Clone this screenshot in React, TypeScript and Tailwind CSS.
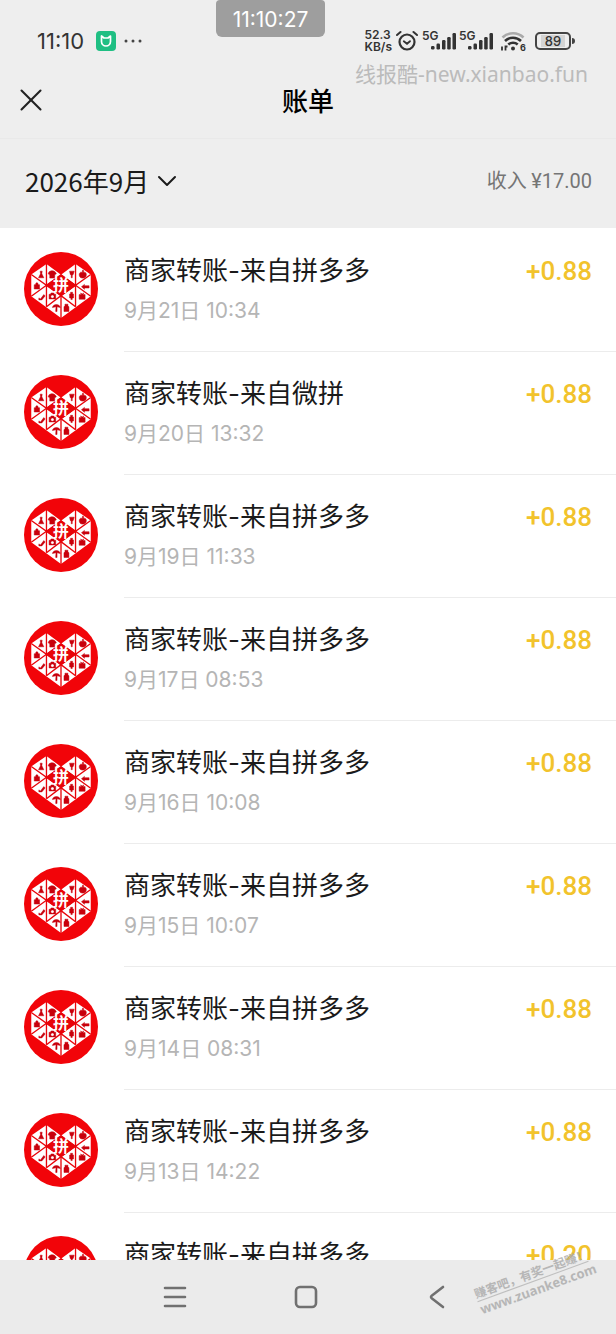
import React from 'react'
import { X, ChevronDown } from 'lucide-react'

interface Bill {
  title: string
  time: string
  amount: string
}

const bills: Bill[] = [
  { title: '商家转账-来自拼多多', time: '9月21日 10:34', amount: '+0.88' },
  { title: '商家转账-来自微拼', time: '9月20日 13:32', amount: '+0.88' },
  { title: '商家转账-来自拼多多', time: '9月19日 11:33', amount: '+0.88' },
  { title: '商家转账-来自拼多多', time: '9月17日 08:53', amount: '+0.88' },
  { title: '商家转账-来自拼多多', time: '9月16日 10:08', amount: '+0.88' },
  { title: '商家转账-来自拼多多', time: '9月15日 10:07', amount: '+0.88' },
  { title: '商家转账-来自拼多多', time: '9月14日 08:31', amount: '+0.88' },
  { title: '商家转账-来自拼多多', time: '9月13日 14:22', amount: '+0.88' },
  { title: '商家转账-来自拼多多', time: '', amount: '+0.20' },
]

// Heart made of triangles, one goods symbol in each
const MerchantLogo: React.FC = () => (
  <svg viewBox="0 0 224 224" className="w-[74px] h-[74px] shrink-0" aria-hidden="true">
    <circle cx="112" cy="112" r="112" fill="#f20409" />
    <path d="M68 36 L112 69 L156 36 L202 68 V134 L112 200 L22 134 V68 Z" fill="#fff" />
    <path d="M112 67 L158 101 L112 134 L66 101 Z" fill="#e8040a" />
    <g stroke="#e8040a" strokeWidth="4" fill="none">
      <path d="M68 36 V166 M156 36 V166 M112 132 V200" />
      <path d="M22 68 L112 132 L202 68 M22 134 L112 69 L202 134 M68 166 L112 132 L156 166" />
    </g>
    <g fill="#c8000c" stroke="#c8000c" strokeWidth="1.5">
      {/* dress, shirt */}
      <path d="M49 58h6l-1 8 6 12H44l6-12z" />
      <path d="M76 60l6-3h6l6 3 4 6-5 3v10H78V69l-5-3z" />
      {/* glass, apple */}
      <path d="M138 58h14l-3 10-3 2v8h-3v-8l-3-2z" />
      <path d="M178 62c-14-6-14 16-2 17h4c12-1 12-23-2-17zM177 55h3v6h-3z" />
      {/* bag, fish */}
      <path d="M31 99h4c0-8 8-8 8 0h4v13H31z" />
      <path d="M174 105l9-7v4h14v7h-14v4z" />
      {/* heel, camera */}
      <path d="M45 139l5 3 10-13 4 4-10 12H45z" />
      <path d="M76 128h4l2-4h8l2 4h4v14H76zM86 130a5 5 0 1 0 .1 0z" fillRule="evenodd" />
      {/* lotion, tv */}
      <path d="M141 122h6v5h3v12h-4v5h-4v-5h-4v-12h3z" />
      <path d="M167 129h7l-3-5 5 3 5-3-3 5h7v14h-18z" />
      {/* umbrella, jar */}
      <path d="M86 168c2-12 22-12 24 0l-10-2v14h-4v-3l1-11z" />
      <path d="M124 158h9v5l3 3v14h-15v-14l3-3z" />
    </g>
    <text
      x="112"
      y="118"
      textAnchor="middle"
      fontSize="48"
      fill="#fff"
      className="font-bold font-['Noto_Sans_CJK_SC',sans-serif]"
    >
      拼
    </text>
  </svg>
)

const MiIcon: React.FC = () => (
  <svg viewBox="0 0 20 20" className="size-5" aria-hidden="true">
    <rect width="20" height="20" rx="4" fill="#1fbf83" />
    <path
      d="M5.5 5v5.5a4.5 4.5 0 0 0 9 0V5L12 7H8z"
      fill="none"
      stroke="#fff"
      strokeWidth="1.7"
      strokeLinejoin="round"
    />
  </svg>
)

const AlarmIcon: React.FC = () => (
  <svg viewBox="0 0 22 22" className="size-[22px]" fill="none" stroke="#333" strokeLinecap="round" aria-hidden="true">
    <circle cx="11" cy="12" r="7.5" strokeWidth="2.2" />
    <path d="M7.8 11.2 L11 13.8 L14 11.2" strokeWidth="1.8" />
    <path d="M1 5 L4.5 2 M21 5 L17.5 2" strokeWidth="2" />
  </svg>
)

const Signal: React.FC = () => (
  <svg viewBox="0 0 37 24" className="w-[37px] h-6" fill="#333" aria-hidden="true">
    <text x="0" y="11" fontSize="12" className="font-semibold font-['Inter',sans-serif]">
      5G
    </text>
    <rect x="9" y="17" width="3.5" height="3.5" rx="1.2" />
    <rect x="14.5" y="14.5" width="3.5" height="6" rx="1.2" />
    <rect x="20" y="11" width="3.5" height="9.5" rx="1.2" />
    <rect x="25.2" y="8" width="3.5" height="12.5" rx="1.2" />
    <rect x="30.5" y="4" width="3.5" height="16.5" rx="1.2" />
  </svg>
)

const WifiIcon: React.FC = () => (
  <svg viewBox="0 0 27 21" className="w-[27px] h-[21px]" fill="none" aria-hidden="true">
    <path d="M2.5 6.5a15 15 0 0 1 21 0" stroke="#aaa" strokeWidth="2.6" />
    <path d="M5 10a11.5 11.5 0 0 1 16 0" stroke="#333" strokeWidth="2.6" />
    <path d="M8.3 13.5a7 7 0 0 1 9.4 0" stroke="#333" strokeWidth="2.6" />
    <circle cx="13" cy="17.5" r="2" fill="#333" />
    <path d="M2 19.5v-4M5.5 19.5v-4h2" stroke="#333" strokeWidth="1.8" />
    <text x="20" y="20" fontSize="9" fill="#333" className="font-bold font-['Inter',sans-serif]">
      6
    </text>
  </svg>
)

const StatusBar: React.FC = () => (
  <div className="flex items-center justify-between h-[62px] pt-5 pl-[37px] pr-[41px] font-['Inter',sans-serif] text-[#333]">
    <div className="flex items-center">
      <span className="text-[22px] leading-6">11:10</span>
      <div className="ml-3 mr-2">
        <MiIcon />
      </div>
      <svg viewBox="0 0 18 4" className="w-[18px] h-1" fill="#444" aria-hidden="true">
        <circle cx="2" cy="2" r="1.5" />
        <circle cx="9" cy="2" r="1.5" />
        <circle cx="16" cy="2" r="1.5" />
      </svg>
    </div>
    <div className="flex items-center">
      <div className="text-xs leading-3 font-semibold mr-1">
        <div>52.3</div>
        <div>KB/s</div>
      </div>
      <AlarmIcon />
      <div className="flex ml-1">
        <Signal />
        <Signal />
      </div>
      <div className="ml-1">
        <WifiIcon />
      </div>
      <div className="flex items-center ml-2">
        <div className="flex items-center justify-center w-9 h-[18px] rounded-[5px] border-2 border-[#444] p-px">
          <span className="bg-[#d4d4d4] px-1 text-[13px] leading-3 font-medium">89</span>
        </div>
        <div className="ml-px w-[3px] h-1.5 rounded-r bg-[#444]" />
      </div>
    </div>
  </div>
)

const BillRow: React.FC<{ bill: Bill }> = ({ bill }) => (
  <li className="flex h-[123px] pl-6 shrink-0">
    <div className="pt-[23px]">
      <MerchantLogo />
    </div>
    <div className="flex flex-1 justify-between ml-[26px] pt-6 pr-6 border-b border-[#ececec]">
      <div className="font-['Inter','Noto_Sans_CJK_SC',sans-serif]">
        <h2 className="text-[26px] leading-9 text-[#1a1a1a]">{bill.title}</h2>
        <p className="mt-1.5 text-[21px] leading-8 text-[#b5b5b5]">{bill.time}</p>
      </div>
      <span className="text-[26px] leading-9 font-medium text-[#f2c32c] font-['Roboto',sans-serif]">{bill.amount}</span>
    </div>
  </li>
)

export default function App() {
  return (
    <div className="relative flex flex-col h-screen overflow-hidden bg-white font-['Noto_Sans_CJK_SC',sans-serif]">
      <header className="bg-[#eee] shrink-0">
        <StatusBar />
        <div className="grid grid-cols-3 items-center h-[77px] px-3 border-b border-[#e9e9e9]">
          <button type="button" aria-label="关闭" className="justify-self-start text-[#222]">
            <X size={38} strokeWidth={1.3} />
          </button>
          <h1 className="text-center text-[26px] leading-9 font-medium text-black">账单</h1>
        </div>
        <div className="flex items-center justify-between h-[89px] px-6 pb-1.5">
          <button type="button" className="flex items-center gap-0.5 text-[26px] leading-9 text-[#1a1a1a]">
            <span className="pl-px">2026年9月</span>
            <ChevronDown size={32} strokeWidth={1.5} />
          </button>
          <span className="text-[20px] leading-8 text-[#757575]">
            收入 <span className="font-['Roboto',sans-serif]">¥17.00</span>
          </span>
        </div>
      </header>

      <ul className="flex flex-col flex-1 min-h-0 pt-px overflow-hidden">
        {bills.map((bill, idx) => (
          <BillRow key={idx} bill={bill} />
        ))}
      </ul>

      <nav className="relative flex items-center justify-center gap-[103px] h-[74px] pr-1 shrink-0 bg-[#ebebeb] text-[#707070]">
        <button type="button" aria-label="最近任务">
          <svg viewBox="0 0 28 28" className="size-7" stroke="currentColor" strokeWidth="2.6" strokeLinecap="round">
            <path d="M4 5h20M4 14h20M4 23h20" />
          </svg>
        </button>
        <button type="button" aria-label="主屏幕">
          <svg viewBox="0 0 28 28" className="size-7" stroke="currentColor" strokeWidth="2.6" fill="none">
            <rect x="4" y="4" width="20" height="20" rx="4" />
          </svg>
        </button>
        <button type="button" aria-label="返回">
          <svg viewBox="0 0 28 28" className="size-7" stroke="currentColor" strokeWidth="2.6" strokeLinecap="round" strokeLinejoin="round" fill="none">
            <path d="M20 4L9 12.5Q7 14 9 15.5L20 24" />
          </svg>
        </button>
      </nav>

      {/* floating clock */}
      <div className="absolute top-0 left-[216px] w-[109px] h-[37px] rounded-b-md rounded-t-sm bg-[#9e9e9e] text-white text-center text-[21px] leading-10 font-['Inter',sans-serif]">
        11:10:27
      </div>
      <div className="absolute top-[59px] right-7 text-[21px] leading-[30px] text-[#bbb] font-['Noto_Sans','Noto_Sans_CJK_SC',sans-serif]">
        线报酷-new.xianbao.fun
      </div>
      <div className="absolute right-6 bottom-9 w-[118px] -rotate-20 text-center font-bold text-[#a9a9a9] opacity-80 whitespace-nowrap">
        <div className="border-b border-[#b4b4b4] text-xs leading-4">赚客吧，有奖一起赚！</div>
        <div className="text-[13px] leading-4 font-['Open_Sans',sans-serif]">www.zuanke8.com</div>
      </div>
    </div>
  )
}
